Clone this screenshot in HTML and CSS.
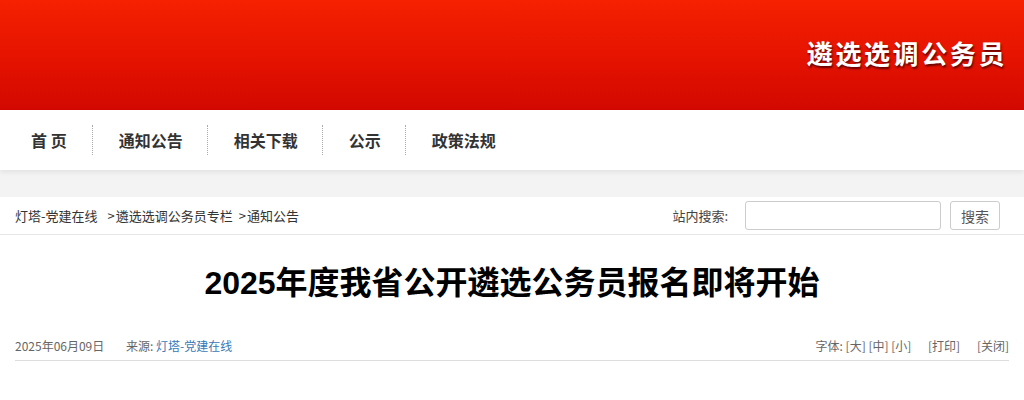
FILE: index.html
```html
<!DOCTYPE html>
<html lang="zh-CN">
<head>
<meta charset="utf-8">
<title>2025年度我省公开遴选公务员报名即将开始</title>
<link rel="stylesheet" href="styles.css">
</head>
<body>
<header class="banner">
  <div class="banner-title">遴选选调公务员</div>
</header>
<nav class="nav">
  <a class="nav-item first" href="#">首 页</a>
  <a class="nav-item" href="#">通知公告</a>
  <a class="nav-item" href="#">相关下载</a>
  <a class="nav-item" href="#">公示</a>
  <a class="nav-item last" href="#">政策法规</a>
</nav>
<div class="band"></div>
<div class="crumbbar">
  <div class="crumbs">
    <a href="#">灯塔-党建在线</a><span class="sep first-sep">&gt;</span><a href="#">遴选选调公务员专栏</a><span class="sep">&gt;</span><a href="#">通知公告</a>
  </div>
  <form class="search">
    <label class="search-label">站内搜索:</label>
    <input class="search-input" type="text">
    <button class="search-btn" type="button">搜索</button>
  </form>
</div>
<main class="article">
  <h1 class="article-title">2025年度我省公开遴选公务员报名即将开始</h1>
  <div class="meta">
    <div class="meta-left">
      <span class="date">2025年06月09日</span>
      <span class="source">来源: <a href="#">灯塔-党建在线</a></span>
    </div>
    <div class="meta-right">
      <span>字体: [大] [中] [小]</span>
      <span class="gap">[打印]</span>
      <span class="gap">[关闭]</span>
    </div>
  </div>
</main>
</body>
</html>
```
FILE: styles.css
```css
* { box-sizing: border-box; }
html, body { margin: 0; padding: 0; }
body {
  width: 1024px;
  height: 400px;
  overflow: hidden;
  background: #fff;
  font-family: "Noto Sans CJK SC", "Noto Sans", sans-serif;
  color: #333;
}
a { text-decoration: none; color: inherit; }

.banner {
  height: 110px;
  background: linear-gradient(to bottom, #f52100 0%, #e81500 45%, #d20800 100%);
  display: flex;
  justify-content: flex-end;
  align-items: center;
  padding-right: 17px;
}
.banner-title {
  color: #fff;
  font-size: 26px;
  font-weight: 700;
  letter-spacing: 2.6px;
  text-shadow: 1px 2px 2px rgba(70, 0, 0, 0.8);
  margin-top: -6px;
}

.nav {
  height: 60px;
  background: #fff;
  display: flex;
  align-items: center;
  position: relative;
  z-index: 2;
  box-shadow: 0 3px 4px rgba(0, 0, 0, 0.06);
}
.nav-item {
  font-size: 16px;
  font-weight: 700;
  color: #333;
  padding: 0 24px 0 26px;
  line-height: 30px;
  border-right: 1px dotted #aaa;
}
.nav-item.first { padding-left: 31px; padding-right: 25px; }
.nav-item.last { border-right: none; }

.band {
  height: 27px;
  background: #f3f3f3;
}

.crumbbar {
  height: 38px;
  display: flex;
  justify-content: space-between;
  align-items: center;
  border-bottom: 1px solid #e6e6e6;
  padding: 0 24px 0 15px;
  font-size: 13px;
  color: #333;
}
.crumbs .sep { margin-left: 6px; margin-right: 1px; }
.crumbs .first-sep { margin-left: 10px; }
.search { display: flex; align-items: center; margin: 0; }
.search-label { color: #444; margin-right: 17px; font-size: 13px; }
.search-input {
  width: 196px;
  height: 29px;
  border: 1px solid #ccc;
  border-radius: 3px;
  margin: 0 9px 0 0;
  padding: 0;
}
.search-btn {
  width: 50px;
  height: 29px;
  border: 1px solid #ccc;
  border-radius: 3px;
  background: #fff;
  color: #555;
  font-family: inherit;
  font-size: 14px;
  padding: 0;
}

.article { padding: 0 15px; }
.article-title {
  margin: 0;
  padding-top: 28px;
  height: 95px;
  text-align: center;
  font-family: "Liberation Sans", "Noto Sans CJK SC", sans-serif;
  font-size: 32px;
  font-weight: 700;
  color: #000;
  line-height: 40px;
}
.meta {
  display: flex;
  justify-content: space-between;
  align-items: center;
  font-size: 12px;
  color: #666;
  height: 31px;
  border-bottom: 1px solid #ddd;
}
.meta .source { margin-left: 19px; }
.meta .source a { color: #3a78b5; }
.meta .gap { margin-left: 14px; }
```
